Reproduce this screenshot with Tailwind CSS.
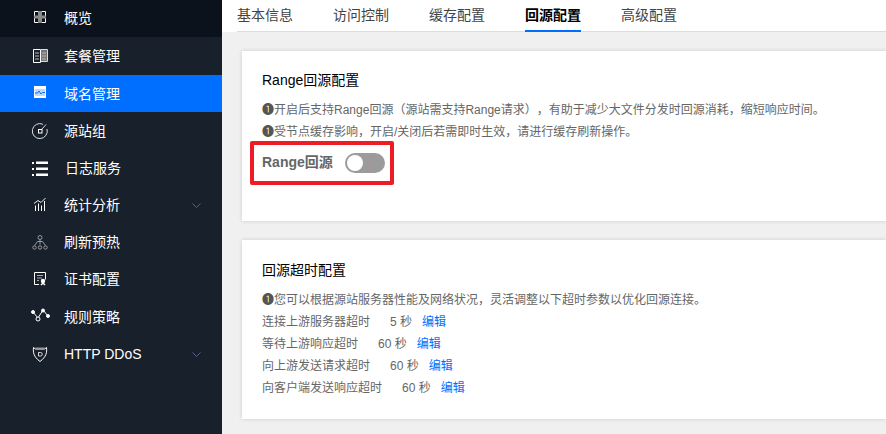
<!DOCTYPE html>
<html lang="zh-CN">
  <head>
    <meta charset="UTF-8" />
    <meta name="viewport" content="width=device-width, initial-scale=1.0" />
    <title>回源配置</title>
    <script src="https://cdn.jsdelivr.net/npm/@tailwindcss/browser@4"></script>
  </head>
  <body class="h-[434px] w-[886px] overflow-hidden flex bg-[#f0f0f0] font-['Liberation_Sans','Noto_Sans_CJK_SC',sans-serif] [text-spacing-trim:space-all]">
    <!-- sidebar -->
    <aside class="w-[222px] h-full shrink-0 bg-[#18202c] text-white text-sm">
      <a class="h-[37px] flex items-center bg-[#0b121c]">
        <svg class="w-[34px] ml-[30px] h-5" viewBox="0 0 34 20" fill="none" stroke="#fff">
          <path d="M9 7.500H4.500V2.500H9M11 2.500h4.500v5H11M9 8.500H4.500v5H9M11 13.500h4.500v-5H11" />
          <rect x="8" y="2" width="4" height="12" fill="#8a8a8a" stroke="none" />
          <rect x="4" y="6.500" width="12" height="3" fill="#8a8a8a" stroke="none" />
        </svg>
        <span class="mb-[2px]">概览</span>
      </a>
      <a class="h-[38px] flex items-center">
        <svg class="w-[34px] ml-[30px] h-5" viewBox="0 0 34 20" fill="none" stroke="#fff">
          <path d="M10.500 3.500h-7v13h7z" />
          <rect x="11" y="4" width="6" height="11" fill="#777" stroke="none" />
          <path d="M11 3.500h6.500v12H11" stroke="#ddd" />
          <path d="M5 7h4M5 10h4M5 13h4M12 7h4M12 10h4M12 13h4" stroke="#bbb" />
        </svg>
        <span>套餐管理</span>
      </a>
      <a class="h-[37px] flex items-center bg-[#006eff]">
        <svg class="w-[34px] ml-[30px] h-5" viewBox="0 0 34 20" fill="none">
          <rect x="4" y="2" width="12" height="12" fill="#fff" />
          <rect x="5" y="5" width="10" height="7" fill="#bcd8ff" />
          <path d="M5 9h2.500l1.500-2 2 3 1.500-1.500H15" stroke="#006eff" />
        </svg>
        <span>域名管理</span>
      </a>
      <a class="h-[38px] flex items-center">
        <svg class="w-[34px] ml-[30px] h-5" viewBox="0 0 34 20" fill="none" stroke="#ddd">
          <path d="M13 3.300A7.500 7.500 0 1 0 17 8" />
          <rect x="8.500" y="8.500" width="3.500" height="3.500" stroke="#fff" />
          <path d="M12 8l4-4.500" />
        </svg>
        <span>源站组</span>
      </a>
      <a class="h-[37px] flex items-center">
        <svg class="w-[34px] ml-[30px] h-5" viewBox="0 0 34 20" fill="#fff">
          <rect x="2" y="3" width="2" height="2" />
          <rect x="6" y="2.500" width="12" height="2.500" />
          <rect x="2" y="9" width="2" height="2" />
          <rect x="6" y="8.500" width="12" height="2.500" />
          <rect x="2" y="15" width="2" height="2" />
          <rect x="6" y="14.500" width="12" height="2.500" />
        </svg>
        <span class="ml-px mb-[2px]">日志服务</span>
      </a>
      <a class="h-[37px] flex items-center">
        <svg class="w-[34px] ml-[30px] h-5" viewBox="0 0 34 20" fill="none" stroke="#fff">
          <path d="M5.500 15V9.500M8.500 15V7.500M11.500 15V9.500M14.500 15V5" />
          <path d="M4 7.500l4-3 3 2 4.500-4.500" stroke="#eee" />
        </svg>
        <span class="mb-[2px]">统计分析</span>
        <svg class="ml-auto mr-[21px] w-[9px] h-[6px]" viewBox="0 0 9 6" fill="none" stroke="#5b5f86">
          <path d="M0.500 0.500l4 4 4-4" />
        </svg>
      </a>
      <a class="h-[37px] flex items-center">
        <svg class="w-[34px] ml-[30px] h-5" viewBox="0 0 34 20" fill="none" stroke="#999">
          <circle cx="10" cy="4.500" r="2" />
          <path d="M10 6.500v5M7.500 8.500h5M7.500 8.500l-3 4M12.500 8.500l3 4" />
          <circle cx="4.500" cy="14.500" r="1.700" />
          <circle cx="10" cy="14.500" r="1.700" />
          <circle cx="15.500" cy="14.500" r="1.700" />
        </svg>
        <span class="mb-[2px]">刷新预热</span>
      </a>
      <a class="h-[37px] flex items-center">
        <svg class="w-[34px] ml-[30px] h-5" viewBox="0 0 34 20" fill="none" stroke="#fff">
          <path d="M9 14.500H4.500V2.500h11v7" />
          <path d="M7 5.500h6M7 8h5M7 10.500h2" stroke="#aaa" />
          <circle cx="13" cy="11" r="2.200" fill="#fff" stroke="none" />
          <path d="M11 15l2-2 2 2" stroke-width="1.500" />
        </svg>
        <span class="mb-[2px]">证书配置</span>
      </a>
      <a class="h-[38px] flex items-center">
        <svg class="w-[34px] ml-[30px] h-5" viewBox="0 0 34 20" fill="none" stroke="#fff">
          <path d="M3 5l5 6 5-8 5 6" />
          <circle cx="3" cy="5" r="1.500" fill="#fff" />
          <circle cx="8" cy="12" r="2" fill="#18202c" />
          <circle cx="13" cy="3.500" r="1.500" fill="#fff" />
          <circle cx="18" cy="9" r="1.500" fill="#fff" />
        </svg>
        <span>规则策略</span>
      </a>
      <a class="h-[37px] flex items-center">
        <svg class="w-[34px] ml-[30px] h-5" viewBox="0 0 34 20" fill="none" stroke="#fff">
          <path d="M3.500 2.500l2 1.500h9l2-1.500c.5 5 0 9-6.500 14-6.500-5-7-9-6.500-14z" />
          <path d="M5.500 3.500h9" stroke="#999" stroke-width="2" />
          <path d="M8.500 7.500h2a1.500 1.500 0 0 1 0 3.500h-2z" stroke="#ddd" />
        </svg>
        <span class="mb-[2px]">HTTP DDoS</span>
        <svg class="ml-auto mr-[21px] w-[9px] h-[6px]" viewBox="0 0 9 6" fill="none" stroke="#5b5f86">
          <path d="M0.500 0.500l4 4 4-4" />
        </svg>
      </a>
    </aside>

    <main class="flex-1 min-w-0 flex flex-col">
      <!-- tabs -->
      <nav class="bg-white h-[32px] pl-[15px] shrink-0">
        <div class="h-full flex gap-10 border-b border-[#ddd] text-sm text-[#444] leading-[32px]">
          <a class="h-[32px] -mt-px">基本信息</a>
          <a class="h-[32px] -mt-px">访问控制</a>
          <a class="h-[32px] -mt-px">缓存配置</a>
          <a class="h-[32px] -mt-px font-bold text-black relative">回源配置<span class="absolute left-0 right-0 top-[31px] h-[2px] bg-[#006eff]"></span></a>
          <a class="h-[32px] -mt-px">高级配置</a>
        </div>
      </nav>

      <div class="pl-5 pt-[19px] flex flex-col gap-[19px]">
        <section class="bg-white h-[170px] shadow-[0_0_4px_rgba(0,0,0,0.15)] pl-5 pt-[19px]">
          <h2 class="text-sm text-black leading-[20px]">Range回源配置</h2>
          <p class="mt-[9px] text-xs leading-[22px] text-[#666]"><span class="text-[#555]">❶</span>开启后支持Range回源（源站需支持Range请求），有助于减少大文件分发时回源消耗，缩短响应时间。</p>
          <p class="text-xs leading-[22px] text-[#666]"><span class="text-[#555]">❶</span>受节点缓存影响，开启/关闭后若需即时生效，请进行缓存刷新操作。</p>
          <div class="relative mt-[10px] flex items-center h-5 text-sm font-bold text-[#666]">
            <span class="absolute -left-[12px] -top-[12px] w-[144px] h-[44px] border-[4px] border-[#ee1c25] rounded-[2px]"></span>
            <span class="-mt-[2px]">Range回源</span>
            <span class="ml-[12px] w-10 h-5 rounded-full bg-[#9b9b9b] p-[2px] flex items-center justify-between">
              <span class="block w-4 h-4 rounded-full bg-white"></span>
              <svg class="w-4 h-3 mr-[2px]" viewBox="0 0 16 12" fill="#c98a96">
                <rect x="1" y="2" width="1" height="1" />
                <rect x="6" y="3" width="1" height="1" />
                <rect x="10" y="2" width="1" height="1" />
                <rect x="3" y="7" width="1" height="1" />
                <rect x="8" y="6" width="1" height="1" />
                <rect x="6" y="10" width="1" height="1" />
              </svg>
            </span>
          </div>
        </section>

        <section class="bg-white h-[179px] shadow-[0_0_4px_rgba(0,0,0,0.15)] pl-5 pt-[20px]">
          <h2 class="text-sm text-black leading-[20px]">回源超时配置</h2>
          <div class="mt-[9px] text-xs leading-[22px] text-[#666]">
            <p><span class="text-[#555]">❶</span>您可以根据源站服务器性能及网络状况，灵活调整以下超时参数以优化回源连接。</p>
            <p class="flex"><span>连接上游服务器超时</span><span class="ml-5">5 秒</span><a class="ml-[10px] text-[#006eff]">编辑</a></p>
            <p class="flex"><span>等待上游响应超时</span><span class="ml-5">60 秒</span><a class="ml-[10px] text-[#006eff]">编辑</a></p>
            <p class="flex"><span>向上游发送请求超时</span><span class="ml-5">60 秒</span><a class="ml-[10px] text-[#006eff]">编辑</a></p>
            <p class="flex"><span>向客户端发送响应超时</span><span class="ml-5">60 秒</span><a class="ml-[10px] text-[#006eff]">编辑</a></p>
          </div>
        </section>
      </div>
    </main>
  </body>
</html>
